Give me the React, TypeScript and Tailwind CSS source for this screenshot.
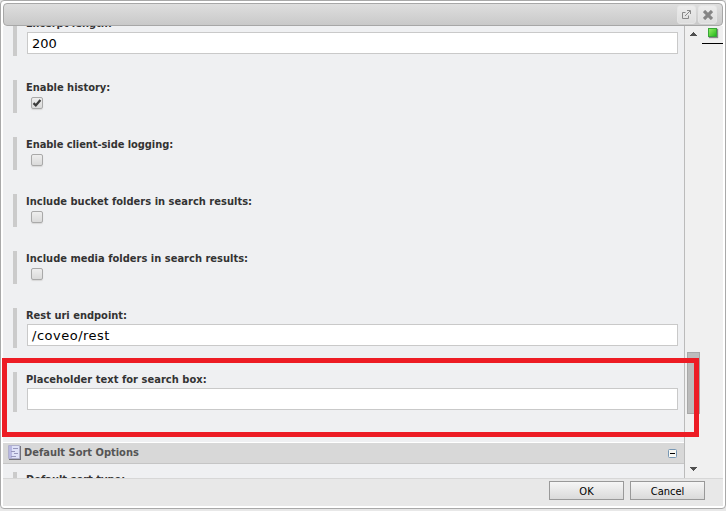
import React from "react";

const UI = "font-['DejaVu_Sans_Condensed','DejaVu_Sans',sans-serif] [font-stretch:condensed]";

function Field({ label, tracking = "tracking-[0px]", children, tall }: { label: string; tracking?: string; children?: React.ReactNode; tall?: boolean }) {
  return (
    <div className={`ml-[10px] mb-6 shrink-0 border-l-4 border-[#cbcbcb] pl-[9px] ${tall ? "h-10" : "h-[33px]"}`}>
      <div className={`h-4 whitespace-nowrap pt-px text-[11px] font-bold leading-[14px] text-[#333] ${tracking}`}>{label}</div>
      {children}
    </div>
  );
}

function TextBox({ value, tracking = "" }: { value?: string; tracking?: string }) {
  return (
    <div className={`ml-px mr-[6px] flex h-[22px] items-center border border-[#c9c9c9] bg-white pl-1 pt-px font-['DejaVu_Sans',sans-serif] text-[13px] leading-5 text-black [font-stretch:normal] ${tracking}`}>
      {value}
    </div>
  );
}

function Check({ checked }: { checked?: boolean }) {
  return (
    <div className="ml-[5px] mt-[1px] flex h-3 w-3 items-center justify-center rounded-[2px] border border-[#a9a9a9] bg-gradient-to-b from-[#eee] to-[#dadada] shadow-[0_1px_1px_#d7d7d7]">
      {checked && (
        <svg width="10" height="10" viewBox="0 0 10 10" className="shrink-0">
          <path d="M1.5 5.2 L3.8 7.4 L8.4 2" fill="none" stroke="#3b3b3b" strokeWidth="2.3" />
        </svg>
      )}
    </div>
  );
}

function ToolButton({ children }: { children: React.ReactNode }) {
  return <div className="flex h-[19px] w-[19px] items-center justify-center rounded-[3px] border border-[#e5e5e5] bg-gradient-to-b from-[#ececec] to-[#dedede]">{children}</div>;
}

function DialogButton({ children }: { children: string }) {
  return (
    <div className={`flex h-[19px] w-[75px] items-center justify-center border border-[#999] bg-gradient-to-b from-[#f6f6f6] to-[#dadada] pt-[2px] text-[11px] leading-[17px] text-black ${UI}`}>
      {children}
    </div>
  );
}

export default function App() {
  return (
    <div className={`relative h-[511px] w-[726px] overflow-hidden bg-[#e8e8e8] ${UI}`}>
      <div className="flex h-[509px] w-[726px] flex-col rounded-[4px] border border-[#a9a9a9] bg-white p-[2px]">
        <div className="z-10 flex h-[23px] shrink-0 items-center justify-end gap-[2px] rounded-[4px] border border-[#a7a7a7] bg-gradient-to-b from-[#dedede] to-[#c9c9c9] pr-[5px]">
          <ToolButton>
            <svg width="9" height="9" viewBox="0 0 9 9" fill="none" stroke="#888">
              <path d="M3.5 2.5H.5v6h6v-3M5 .5h3.5V4M3 6l5-5" />
            </svg>
          </ToolButton>
          <ToolButton>
            <svg width="10" height="10" viewBox="0 0 10 10" fill="none" stroke="#858585" strokeWidth="3.2">
              <path d="M1 1l8 8M9 1L1 9" />
            </svg>
          </ToolButton>
        </div>
        <div className="flex h-[452px] shrink-0 bg-[#f0f0f0]">
          <div className="flex h-[452px] w-[682px] flex-col overflow-hidden border-r border-[#bbb] bg-[#eff0f2]">
            <div className="-mt-[10px] flex shrink-0 flex-col">
              <Field label="Excerpt length:" tall><TextBox value="200" /></Field>
              <Field label="Enable history:"><Check checked /></Field>
              <Field label="Enable client-side logging:" tracking="tracking-[-0.06px]"><Check /></Field>
              <Field label="Include bucket folders in search results:" tracking="tracking-[0.03px]"><Check /></Field>
              <Field label="Include media folders in search results:" tracking="tracking-[0.02px]"><Check /></Field>
              <Field label="Rest uri endpoint:" tall><TextBox value="/coveo/rest" tracking="tracking-[0.5px]" /></Field>
              <Field label="Placeholder text for search box:" tracking="tracking-[0.04px]" tall><TextBox /></Field>
              <div className="mb-2 mt-[6px] flex h-[22px] items-center border-b border-t border-b-[#c5c5c5] border-t-white bg-[#d8d8d8] pl-[5px] pr-[7px]">
                <svg width="13" height="15" viewBox="0 0 13 15" className="-mt-px">
                  <path d="M1 1h12v14H1z" fill="#74747c" />
                  <path d="M.5.5h11v13H.5z" fill="#dfe2f8" stroke="#b0b0cc" />
                  <path d="M1 1h3v12H1z" fill="#b8b8e2" />
                  <path d="M5 3.5h5M3 6.5h4M6 8.5h4M3 11.5h5" stroke="#9696bc" />
                </svg>
                <div className="ml-[3px] flex-1 text-[11px] font-bold leading-[14px] text-[#555]">Default Sort Options</div>
                <svg width="9" height="9" viewBox="0 0 9 9">
                  <rect x=".5" y=".5" width="8" height="8" rx="1" fill="#f7f7f3" stroke="#7898b5" />
                  <path d="M2 4.5h5" stroke="#000" />
                </svg>
              </div>
              <Field label="Default sort type:" />
            </div>
          </div>
          <div className="flex w-[17px] flex-col items-center">
            <svg className="mt-[6px]" width="7" height="4" viewBox="0 0 7 4"><path d="M3 0h1v1h1v1h1v1h1v1H0V3h1V2h1V1h1z" fill="#505050" /></svg>
            <div className="mt-[316px] h-[62px] w-[13px] border border-[#a8a8a8] bg-[#bcbcbc]" />
            <svg className="mt-[53px]" width="7" height="4" viewBox="0 0 7 4"><path d="M0 0h7v1H6v1H5v1H4v1H3V3H2V2H1V1H0z" fill="#505050" /></svg>
          </div>
          <div className="flex h-[18px] w-[21px] justify-center border-b border-black pt-[2px]">
            <div className="h-[9px] w-[9px] border border-[#3aa53a] bg-gradient-to-br from-[#8df060] to-[#18b818] shadow-[1px_1px_1px_#888]" />
          </div>
        </div>
        <div className="flex h-7 shrink-0 gap-[6px] border-t border-[#d7d7d7] bg-[#e8e8e8] pl-[546px] pt-[2px]">
          <DialogButton>OK</DialogButton>
          <DialogButton>Cancel</DialogButton>
        </div>
      </div>
      <div className="absolute left-[2px] top-[358px] z-20 h-[79px] w-[697px] border-[5px] border-[#ed1c24]" />
    </div>
  );
}
